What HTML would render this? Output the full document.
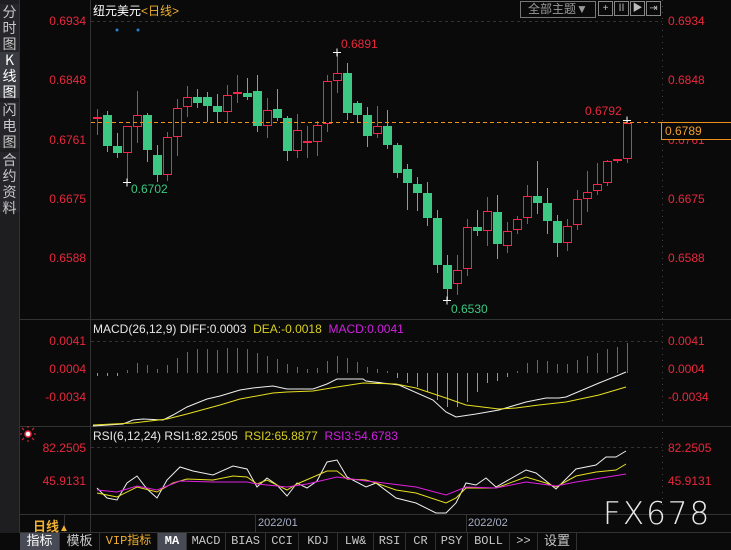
<!DOCTYPE html>
<html><head><meta charset="utf-8"><style>
body{margin:0;background:#0a0a0a;width:731px;height:550px;overflow:hidden;position:relative;font-family:"Liberation Sans","Noto Sans CJK SC",sans-serif}
.a{position:absolute;white-space:nowrap}
#side{position:absolute;left:0;top:0;width:19px;height:533px;background:#1e1e20;border-right:1px solid #333}
.sb{position:absolute;left:0;width:19px;color:#c8c8c8;font-size:14px;line-height:16px;text-align:center;font-family:"Noto Sans CJK SC",sans-serif}
.tab{position:absolute;top:533px;height:17px;line-height:17px;font-size:12px;color:#c8c8c8;text-align:center;border-right:1px solid #333;font-family:"Liberation Mono","Noto Sans CJK SC",monospace}
.r{color:#e8283c;font-size:12px}
</style></head><body>
<div id="side">
<div class="sb" style="top:4px;height:48px;background:#26262a">分<br>时<br>图</div>
<div class="sb" style="top:52px;height:46px;background:#3a3b40;color:#fff">K<br>线<br>图</div>
<div class="sb" style="top:102px;height:46px;background:#26262a">闪<br>电<br>图</div>
<div class="sb" style="top:152px;height:60px;background:#26262a">合<br>约<br>资<br>料</div>
</div>
<svg class="a" style="left:0;top:0" width="731" height="550">
<line x1="90.5" y1="0" x2="90.5" y2="533" stroke="#333"/>
<line x1="662.5" y1="0" x2="662.5" y2="515" stroke="#444" stroke-dasharray="1,5"/>
<line x1="20" y1="319.5" x2="731" y2="319.5" stroke="#333"/>
<line x1="20" y1="426.5" x2="731" y2="426.5" stroke="#333"/>
<line x1="20" y1="514.5" x2="731" y2="514.5" stroke="#333"/>
<line x1="20" y1="532.5" x2="731" y2="532.5" stroke="#333"/>
<line x1="64.5" y1="515" x2="64.5" y2="533" stroke="#333"/>
<line x1="255.5" y1="515" x2="255.5" y2="533" stroke="#333"/>
<line x1="466.5" y1="515" x2="466.5" y2="533" stroke="#333"/>
<line x1="91" y1="21.5" x2="662" y2="21.5" stroke="#333" stroke-dasharray="3,3"/>
<line x1="91" y1="341.5" x2="662" y2="341.5" stroke="#333" stroke-dasharray="3,3"/>
<line x1="91" y1="447.5" x2="662" y2="447.5" stroke="#333" stroke-dasharray="3,3"/>
<circle cx="117" cy="30" r="1.5" fill="#2a7fd0"/><circle cx="138" cy="30" r="1.5" fill="#2a7fd0"/>
<path fill="none" stroke="#f0284a" d="M97.5 109V135M127.5 126V182M137.5 91V143M167.5 132V181M177.5 99V156M187.5 86V117M227.5 85V122M237.5 75V103M267.5 98V138M297.5 114V158M307.5 126V158M317.5 121V156M327.5 75V132M337.5 52V93M377.5 106V138M457.5 255V295M467.5 219V276M487.5 197V246M507.5 222V253M517.5 216V234M527.5 185V224M567.5 219V251M577.5 190V230M587.5 171V212M597.5 163V195M607.5 160V186M617.5 159V163M627.5 120V163"/>
<g fill="#0a0a0a" stroke="#f0284a">
<rect x="123.5" y="126.5" width="8" height="26"/><rect x="133.5" y="115.5" width="8" height="11"/><rect x="163.5" y="137.5" width="8" height="37"/><rect x="173.5" y="108.5" width="8" height="28"/><rect x="183.5" y="97.5" width="8" height="9"/><rect x="223.5" y="95.5" width="8" height="16"/><rect x="263.5" y="110.5" width="8" height="15"/><rect x="293.5" y="130.5" width="8" height="20"/><rect x="313.5" y="125.5" width="8" height="16"/><rect x="323.5" y="81.5" width="8" height="42"/><rect x="333.5" y="73.5" width="8" height="7"/><rect x="373.5" y="126.5" width="8" height="7"/><rect x="453.5" y="270.5" width="8" height="13"/><rect x="463.5" y="227.5" width="8" height="41"/><rect x="483.5" y="211.5" width="8" height="19"/><rect x="503.5" y="231.5" width="8" height="14"/><rect x="513.5" y="219.5" width="8" height="10"/><rect x="523.5" y="196.5" width="8" height="21"/><rect x="563.5" y="226.5" width="8" height="16"/><rect x="573.5" y="199.5" width="8" height="25"/><rect x="583.5" y="192.5" width="8" height="6"/><rect x="593.5" y="184.5" width="8" height="6"/><rect x="603.5" y="161.5" width="8" height="21"/><rect x="623.5" y="123.5" width="8" height="35"/>
</g>
<g fill="#f0284a"><rect x="93" y="117" width="9" height="2"/><rect x="233" y="92" width="9" height="2"/><rect x="303" y="141" width="9" height="2"/><rect x="613" y="159" width="9" height="2"/></g>
<path fill="none" stroke="#3cc882" d="M107.5 111V152M117.5 133V158M147.5 113V162M157.5 145V182M197.5 89V108M207.5 92V122M217.5 94V122M247.5 78V100M257.5 75V132M277.5 89V121M287.5 116V161M347.5 63V120M357.5 101V122M367.5 107V147M387.5 110V149M397.5 143V178M407.5 164V210M417.5 177V211M427.5 182V226M437.5 210V273M447.5 255V300M477.5 210V236M497.5 195V259M537.5 161V214M547.5 188V234M557.5 215V257"/>
<g fill="#3cc882">
<rect x="103" y="115" width="9" height="31"/><rect x="113" y="146" width="9" height="7"/><rect x="143" y="115" width="9" height="35"/><rect x="153" y="155" width="9" height="20"/><rect x="193" y="97" width="9" height="6"/><rect x="203" y="97" width="9" height="9"/><rect x="213" y="106" width="9" height="6"/><rect x="243" y="93" width="9" height="4"/><rect x="253" y="91" width="9" height="35"/><rect x="273" y="109" width="9" height="9"/><rect x="283" y="118" width="9" height="33"/><rect x="343" y="73" width="9" height="40"/><rect x="353" y="103" width="9" height="12"/><rect x="363" y="115" width="9" height="21"/><rect x="383" y="126" width="9" height="19"/><rect x="393" y="145" width="9" height="28"/><rect x="403" y="169" width="9" height="14"/><rect x="413" y="184" width="9" height="9"/><rect x="423" y="193" width="9" height="25"/><rect x="433" y="218" width="9" height="47"/><rect x="443" y="265" width="9" height="24"/><rect x="473" y="227" width="9" height="4"/><rect x="493" y="212" width="9" height="32"/><rect x="533" y="196" width="9" height="7"/><rect x="543" y="203" width="9" height="18"/><rect x="553" y="221" width="9" height="22"/>
</g>
<path fill="none" stroke="#f0284a" d="M127.5 370V373M137.5 363V373M147.5 365V373M157.5 369V373M167.5 365V373M177.5 358V373M187.5 352V373M197.5 349V373M207.5 349V373M217.5 350V373M227.5 348V373M237.5 348V373M247.5 349V373M257.5 353V373M267.5 356V373M277.5 359V373M287.5 364V373M297.5 367V373M307.5 369V373M317.5 368V373M327.5 361V373M337.5 356V373M347.5 358V373M357.5 362V373M367.5 367V373M377.5 369V373M387.5 371V373M517.5 371V373M527.5 363V373M537.5 360V373M547.5 361V373M557.5 364V373M567.5 364V373M577.5 360V373M587.5 356V373M597.5 353V373M607.5 349V373M617.5 347V373M627.5 343V373"/>
<path fill="none" stroke="#3cc882" d="M97.5 373V376M107.5 373V376M117.5 373V376M397.5 373V378M407.5 373V383M417.5 373V387M427.5 373V392M437.5 373V400M447.5 373V407M457.5 373V407M467.5 373V402M477.5 373V392M487.5 373V383M497.5 373V381M507.5 373V377"/>
<line x1="91" y1="122.5" x2="662" y2="122.5" stroke="#f0901c" stroke-dasharray="4,3"/>
<g stroke="#fff" stroke-width="1">
<path d="M333 52.5h8M337 48.5v8"/><path d="M123 182.5h8M127 178.5v8"/><path d="M443 300.5h8M447 296.5v8"/><path d="M623 120.5h8M627 116.5v6"/>
</g>
<polyline fill="none" stroke="#f0f0f0" points="93,426 123,424 133,420 143,419 163,420 173,415 187,407 207,399 220,396 240,390 253,388 273,386 287,389 313,389 327,384 337,379 363,379 366,381 399,385 433,400 446,412 456,417 476,414 499,410 526,402 546,398 559,398 566,397 599,383 619,375 626,372"/>
<polyline fill="none" stroke="#e8e020" points="93,425 133,423 167,419 187,414 220,405 240,399 273,393 287,392 313,391 337,387 363,383 396,384 416,388 446,398 466,405 499,409 516,408 539,405 566,402 599,395 626,387"/>
<polyline fill="none" stroke="#f0f0f0" points="97,488 107,498 117,500 127,483 137,476 147,489 157,498 167,480 180,467 193,471 213,475 233,466 247,469 257,487 267,478 277,485 287,496 297,483 307,488 317,481 327,462 337,460 347,477 366,487 376,483 396,498 416,503 436,513 446,513 456,503 466,483 476,485 486,478 496,487 526,470 536,473 556,489 576,469 596,465 606,457 616,457 626,451"/>
<polyline fill="none" stroke="#e8e020" points="97,493 117,497 137,487 157,492 173,483 187,479 213,480 233,476 247,477 257,484 267,480 287,490 297,484 327,471 337,471 347,479 366,480 376,483 396,490 416,493 446,503 456,498 466,488 476,488 496,488 526,477 546,483 556,487 576,476 596,472 616,470 626,464"/>
<polyline fill="none" stroke="#e020e0" points="97,490 117,492 137,486 157,490 180,481 213,482 247,482 257,484 287,487 307,484 337,477 366,481 376,482 416,487 446,495 466,487 496,488 526,482 556,486 576,482 626,474"/>
<circle cx="28" cy="434" r="3" fill="#fff" stroke="#e8283c" stroke-width="1.5"/>
<path d="M22 428l2 2M34 428l-2 2M22 440l2-2M34 440l-2-2M28 426v2M28 440v2M20 434h2M34 434h2" stroke="#e8283c"/>
<path d="M666 128l5-5 5 5z" fill="#f0901c"/>
</svg>
<div class="a" style="left:93px;top:2px;font-size:12px;color:#fff">纽元美元<span style="color:#f0b030">&lt;日线&gt;</span></div>
<div class="a" style="left:520px;top:1px;width:74px;height:15px;border:1px solid #777;color:#999;font-size:12px;line-height:15px;text-align:center">全部主题▼</div>
<div class="a" style="left:598px;top:1px;width:13px;height:13px;border:1px solid #888;color:#bbb;font-size:10px;line-height:13px;text-align:center">+</div>
<div class="a" style="left:614px;top:1px;width:13px;height:13px;border:1px solid #888;color:#bbb;font-size:10px;line-height:13px;text-align:center">Ⅱ</div>
<div class="a" style="left:630px;top:1px;width:13px;height:13px;border:1px solid #888;color:#bbb;font-size:10px;line-height:13px;text-align:center">▶</div>
<div class="a" style="left:646px;top:1px;width:13px;height:13px;border:1px solid #888;color:#bbb;font-size:10px;line-height:13px;text-align:center">⇥</div>
<div class="a r" style="right:645px;top:14px">0.6934</div>
<div class="a r" style="right:645px;top:73px">0.6848</div>
<div class="a r" style="right:645px;top:133px">0.6761</div>
<div class="a r" style="right:645px;top:192px">0.6675</div>
<div class="a r" style="right:645px;top:251px">0.6588</div>
<div class="a r" style="left:668px;top:14px">0.6934</div>
<div class="a r" style="left:668px;top:73px">0.6848</div>
<div class="a r" style="left:668px;top:133px">0.6761</div>
<div class="a r" style="left:668px;top:192px">0.6675</div>
<div class="a r" style="left:668px;top:251px">0.6588</div>
<div class="a" style="left:661px;top:122px;width:66px;height:16px;border:1px solid #f0901c;background:#0a0a0a;color:#f0a030;font-size:12px;line-height:16px;padding-left:3px">0.6789</div>
<div class="a r" style="left:341px;top:37px">0.6891</div>
<div class="a r" style="left:585px;top:104px">0.6792</div>
<div class="a" style="left:131px;top:182px;color:#3cc882;font-size:12px">0.6702</div>
<div class="a" style="left:451px;top:302px;color:#3cc882;font-size:12px">0.6530</div>
<div class="a" style="left:93px;top:322px;font-size:12px;color:#e8e8e8">MACD(26,12,9) DIFF:0.0003 &nbsp;<span style="color:#d8d020">DEA:-0.0018</span> &nbsp;<span style="color:#d020e0">MACD:0.0041</span></div>
<div class="a r" style="right:645px;top:334px">0.0041</div>
<div class="a r" style="right:645px;top:362px">0.0004</div>
<div class="a r" style="right:645px;top:390px">-0.0034</div>
<div class="a r" style="left:668px;top:334px">0.0041</div>
<div class="a r" style="left:668px;top:362px">0.0004</div>
<div class="a r" style="left:668px;top:390px">-0.0034</div>
<div class="a" style="left:93px;top:429px;font-size:12px;color:#e8e8e8">RSI(6,12,24) RSI1:82.2505 &nbsp;<span style="color:#d8d020">RSI2:65.8877</span> &nbsp;<span style="color:#d020e0">RSI3:54.6783</span></div>
<div class="a r" style="right:645px;top:441px">82.2505</div>
<div class="a r" style="right:645px;top:474px">45.9131</div>
<div class="a r" style="left:668px;top:441px">82.2505</div>
<div class="a r" style="left:668px;top:474px">45.9131</div>
<div class="a" style="left:603px;top:496px;font-size:31px;color:#e8e8e8;letter-spacing:2px;font-family:'DejaVu Sans',sans-serif;font-weight:300">FX678</div>
<div class="a" style="left:33px;top:516px;font-size:13px;color:#f0b030;font-weight:bold">日线<span style="font-size:10px">▲</span></div>
<div class="a" style="left:258px;top:517px;font-size:11px;color:#a8b0c8">2022/01</div>
<div class="a" style="left:468px;top:517px;font-size:11px;color:#a8b0c8">2022/02</div>
<div class="tab" style="left:20px;width:39px;background:#484a55;color:#fff;font-size:13px">指标</div>
<div class="tab" style="left:60px;width:39px;font-size:13px">模板</div>
<div class="tab" style="left:100px;width:57px;color:#f0b030">VIP指标</div>
<div class="tab" style="left:158px;width:28px;background:#484a55;color:#fff;font-weight:bold">MA</div>
<div class="tab" style="left:187px;width:38px">MACD</div>
<div class="tab" style="left:226px;width:39px">BIAS</div>
<div class="tab" style="left:266px;width:32px">CCI</div>
<div class="tab" style="left:299px;width:38px">KDJ</div>
<div class="tab" style="left:338px;width:35px">LW&amp;</div>
<div class="tab" style="left:374px;width:31px">RSI</div>
<div class="tab" style="left:406px;width:29px">CR</div>
<div class="tab" style="left:436px;width:31px">PSY</div>
<div class="tab" style="left:468px;width:41px">BOLL</div>
<div class="tab" style="left:510px;width:27px">&gt;&gt;</div>
<div class="tab" style="left:538px;width:38px;font-size:13px">设置</div>
</body></html>
